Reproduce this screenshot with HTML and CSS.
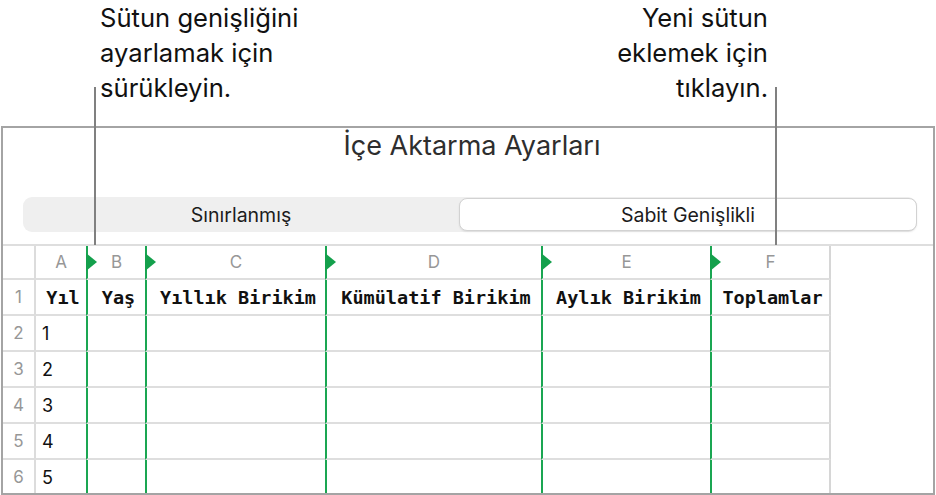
FILE: index.html
```html
<!DOCTYPE html>
<html lang="tr">
<head>
  <meta charset="UTF-8" />
  <meta name="viewport" content="width=device-width, initial-scale=1.0" />
  <title>İçe Aktarma Ayarları</title>
  <link rel="stylesheet" href="styles.css">
</head>
<body>
  <div class="callouts">
    <p class="note">Sütun genişliğini<br>ayarlamak için<br>sürükleyin.</p>
    <p class="note note-right">Yeni sütun<br>eklemek için<br>tıklayın.</p>
  </div>

  <div class="panel">
    <h1>İçe Aktarma Ayarları</h1>

    <div class="toolbar">
      <div class="segmented">
        <div class="seg">Sınırlanmış</div>
        <div class="seg active">Sabit Genişlikli</div>
      </div>
    </div>

    <div class="sheet">
      <div class="cell corner"></div>
      <div class="cell letter first">A</div>
      <div class="cell letter split">B</div>
      <div class="cell letter split">C</div>
      <div class="cell letter split">D</div>
      <div class="cell letter split">E</div>
      <div class="cell letter split last">F</div>

      <div class="cell num">1</div>
      <div class="cell head first">Yıl</div>
      <div class="cell head split">Yaş</div>
      <div class="cell head split">Yıllık Birikim</div>
      <div class="cell head split">Kümülatif Birikim</div>
      <div class="cell head split">Aylık Birikim</div>
      <div class="cell head split last">Toplamlar</div>

      <div class="cell num">2</div>
      <div class="cell data first">1</div>
      <div class="cell split"></div><div class="cell split"></div><div class="cell split"></div><div class="cell split"></div><div class="cell split last"></div>

      <div class="cell num">3</div>
      <div class="cell data first">2</div>
      <div class="cell split"></div><div class="cell split"></div><div class="cell split"></div><div class="cell split"></div><div class="cell split last"></div>

      <div class="cell num">4</div>
      <div class="cell data first">3</div>
      <div class="cell split"></div><div class="cell split"></div><div class="cell split"></div><div class="cell split"></div><div class="cell split last"></div>

      <div class="cell num">5</div>
      <div class="cell data first">4</div>
      <div class="cell split"></div><div class="cell split"></div><div class="cell split"></div><div class="cell split"></div><div class="cell split last"></div>

      <div class="cell num">6</div>
      <div class="cell data first">5</div>
      <div class="cell split"></div><div class="cell split"></div><div class="cell split"></div><div class="cell split"></div><div class="cell split last"></div>
    </div>
  </div>

  <!-- leader lines from the notes down to the sheet -->
  <div class="leader leader-left"></div>
  <div class="leader leader-right"></div>
</body>
</html>
```

FILE: styles.css
```css
* {
  margin: 0;
  padding: 0;
  box-sizing: border-box;
}

html, body {
  height: 100%;
  overflow: hidden;
  font-family: 'Inter', 'Roboto', sans-serif;
  background: #fff;
  color: #111;
}

body {
  position: relative;
}

.callouts {
  height: 126px;
  display: flex;
  justify-content: space-between;
  padding: 0 168px 0 100px;
}

.note {
  font-size: 25.6px;
  line-height: 35px;
  color: #111;
}

.note-right {
  text-align: right;
}

.leader {
  position: absolute;
  top: 87px;
  width: 2px;
  height: 158px;
  background: #808080;
}

.leader-left { left: 94px; }
.leader-right { left: 775px; }

.panel {
  margin: 0 1px 0 1px;
  height: 369px;
  border: 2px solid #a4a4a4;
  overflow: hidden;
}

.panel h1 {
  margin-top: 2px;
  font-size: 27px;
  line-height: 32px;
  font-weight: 400;
  text-align: center;
  color: #2e2e2e;
  padding-left: 8px;
}

.toolbar {
  margin-top: 35px;
  padding: 0 16px 12px 20px;
  border-bottom: 2px solid #dedede;
}

.segmented {
  display: flex;
  height: 35px;
  background: #efefef;
  border-radius: 9px;
}

.seg {
  flex: 1;
  display: flex;
  align-items: center;
  justify-content: center;
  font-size: 19.5px;
  color: #1c1c1c;
}

.seg.active {
  flex: 0 0 458px;
  margin: 1px 0;
  background: #fff;
  border: 1px solid #d2d2d2;
  border-radius: 8px;
  box-shadow: 0 1px 2px rgba(0, 0, 0, 0.08);
}

.sheet {
  display: grid;
  grid-template-columns: 31px 52px 59px 180px 216px 169px 121px;
  grid-template-rows: 34px repeat(6, 36px);
}

.cell {
  position: relative;
  display: flex;
  align-items: center;
  border-bottom: 2px solid #dedede;
}

.cell.first {
  border-left: 2px solid #dcdcdc;
}

.cell.split {
  border-left: 2px solid #1aa652;
}

.cell.last {
  border-right: 2px solid #d6d6d6;
}

.letter, .num {
  justify-content: center;
  font-size: 17px;
  color: #979797;
}

.letter.split::before {
  content: "";
  position: absolute;
  left: -2px;
  top: 7px;
  border-left: 11px solid #14a04c;
  border-top: 9px solid transparent;
  border-bottom: 9px solid transparent;
}

.head {
  justify-content: center;
  padding-left: 4px;
  font-family: 'DejaVu Sans Mono', monospace;
  font-weight: 700;
  font-size: 18.5px;
  color: #111;
}

.data {
  padding-left: 6px;
  font-size: 18px;
  color: #111;
}
```
